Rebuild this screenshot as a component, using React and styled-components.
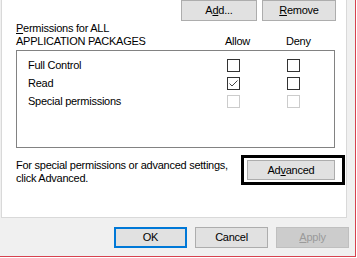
import React from "react";
import styled, { createGlobalStyle, css } from "styled-components";

const Global = createGlobalStyle`
  html, body { margin: 0; padding: 0; background: #ffffff; }
  body { font-family: "Liberation Sans", Arial, sans-serif; }
`;

const Window = styled.div`
  box-sizing: border-box;
  width: 356px;
  height: 257px;
  background: #f0f0f0;
  border-right: 1px solid #d8414f;
  border-bottom: 1px solid #d8414f;
  display: flex;
  flex-direction: column;
  font: 11px/13px "Liberation Sans", Arial, sans-serif;
  letter-spacing: -0.25px;
  color: #000;
  overflow: hidden;
`;

const Panel = styled.div`
  box-sizing: border-box;
  margin-left: 1px;
  width: 346px;
  height: 218px;
  background: #ffffff;
  border: 1px solid #d9d9d9;
  border-top: none;
  padding-left: 14px;
  display: flex;
  flex-direction: column;
`;

const ButtonRow = styled.div`
  display: flex;
  justify-content: flex-end;
  gap: 5px;
  padding-right: 10px;
`;

const Button = styled.div`
  box-sizing: border-box;
  width: ${(p) => p.$w || 73}px;
  height: ${(p) => p.$h || 21}px;
  display: flex;
  align-items: center;
  justify-content: center;
  background: #e1e1e1;
  border: 1px solid #adadad;
  color: #000;
  ${(p) =>
    p.$default &&
    css`
      border: 2px solid #0078d7;
    `}
  ${(p) =>
    p.$disabled &&
    css`
      background: #cccccc;
      border-color: #bfbfbf;
      color: #9a9a9a;
    `}
`;

const HeaderGrid = styled.div`
  margin-top: 1px;
  display: grid;
  grid-template-columns: 209px 61px auto;
  align-items: end;
`;

const ListBox = styled.div`
  box-sizing: border-box;
  margin-top: 2px;
  width: 319px;
  height: 98px;
  border: 1px solid #828282;
  padding: 5px 0 0 11px;
  display: flex;
  flex-direction: column;
`;

const PermRow = styled.div`
  display: grid;
  grid-template-columns: 199px 60px 13px;
  align-items: center;
  height: 18px;
`;

const Box = styled.div`
  box-sizing: border-box;
  width: 13px;
  height: 13px;
  background: #fff;
  border: 1px solid ${(p) => (p.$disabled ? "#cccccc" : "#333333")};
  display: flex;
  align-items: center;
  justify-content: center;
`;

const FooterRow = styled.div`
  margin-top: 7px;
  display: flex;
  align-items: flex-start;
  padding-right: 1px;
`;

const Note = styled.div`
  padding-top: 4px;
`;

const FocusFrame = styled.div`
  margin-left: auto;
  border: 3px solid #000;
  padding: 2px 7px 2px 3px;
  background: #fff;
`;

const BottomBar = styled.div`
  margin-top: 9px;
  display: flex;
  justify-content: flex-end;
  gap: 8px;
  padding-right: 6px;
`;

function Check({ checked, disabled }) {
  return (
    <Box $disabled={disabled}>
      {checked && (
        <svg width="11" height="11" viewBox="0 0 11 11">
          <polyline
            points="1.5,5.5 4,8 9.5,2.5"
            fill="none"
            stroke="#444"
            strokeWidth="1"
          />
        </svg>
      )}
    </Box>
  );
}

const perms = [
  { name: "Full Control", allow: false, deny: false },
  { name: "Read", allow: true, deny: false },
  { name: "Special permissions", allow: false, deny: false, disabled: true },
];

export default function App() {
  return (
    <>
      <Global />
      <Window>
        <Panel>
          <ButtonRow>
            <Button $w={76}>
              A<u>d</u>d...
            </Button>
            <Button $w={74}>
              <u>R</u>emove
            </Button>
          </ButtonRow>
          <HeaderGrid>
            <div>
              <u>P</u>ermissions for ALL
              <br />
              APPLICATION PACKAGES
            </div>
            <div>Allow</div>
            <div>Deny</div>
          </HeaderGrid>
          <ListBox>
            {perms.map((p) => (
              <PermRow key={p.name}>
                <span>{p.name}</span>
                <Check checked={p.allow} disabled={p.disabled} />
                <Check checked={p.deny} disabled={p.disabled} />
              </PermRow>
            ))}
          </ListBox>
          <FooterRow>
            <Note>
              For special permissions or advanced settings,
              <br />
              click Advanced.
            </Note>
            <FocusFrame>
              <Button $w={88} $h={20}>
                Ad<u>v</u>anced
              </Button>
            </FocusFrame>
          </FooterRow>
        </Panel>
        <BottomBar>
          <Button $default>OK</Button>
          <Button>Cancel</Button>
          <Button $disabled>
            <u>A</u>pply
          </Button>
        </BottomBar>
      </Window>
    </>
  );
}
